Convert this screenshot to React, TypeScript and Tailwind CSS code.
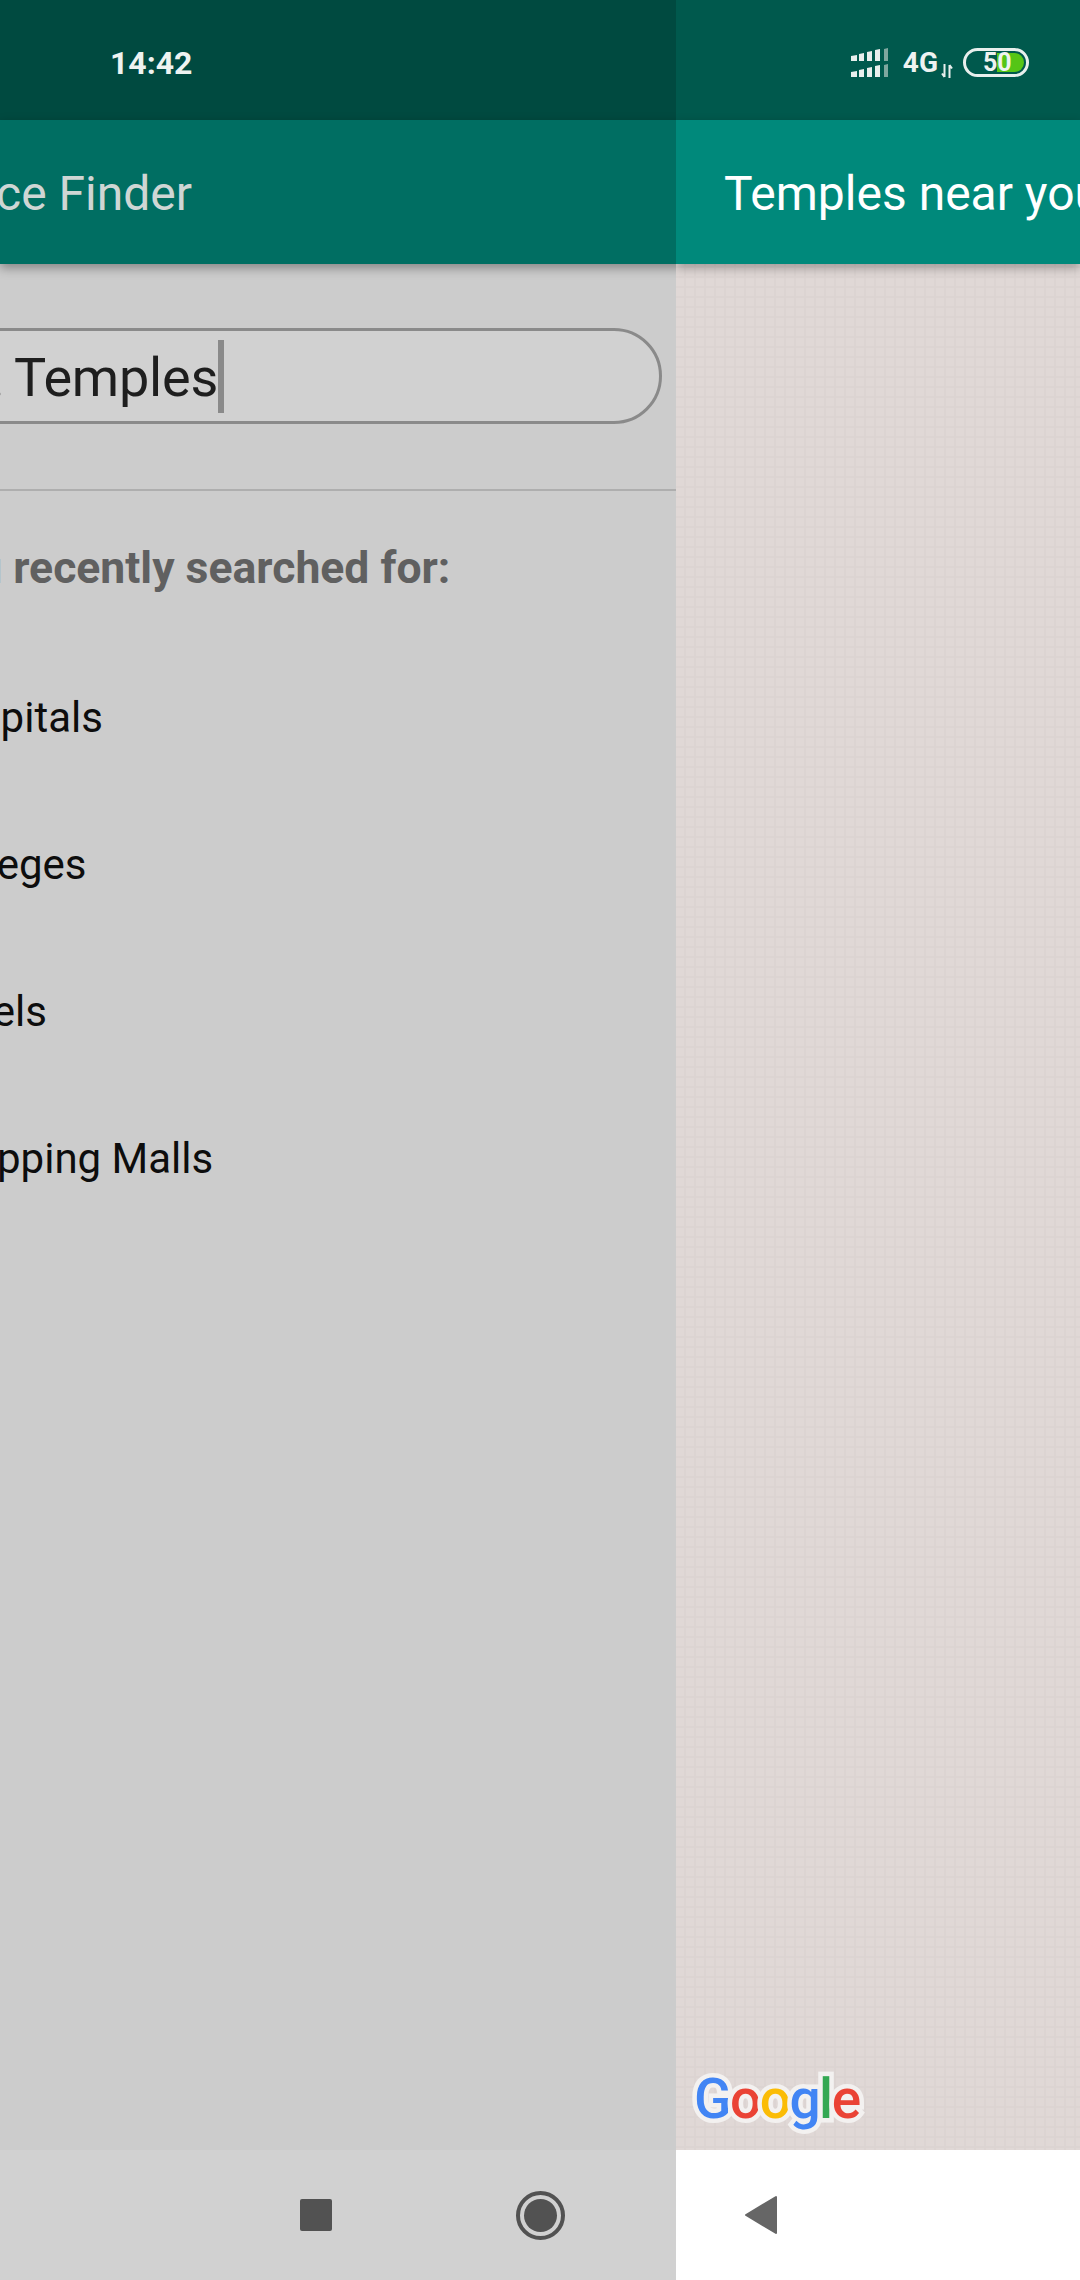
import { Search } from "lucide-react";

const font = "font-['Roboto',sans-serif]";

function SignalIcon() {
  const rows = [0, 1];
  return (
    <svg width="38" height="30" viewBox="0 0 38 30" className="block">
      {rows.map((r) => (
        <g key={r} transform={`translate(0 ${r * 16})`} fill="#e8efed">
          <path d="M0 8 L6 7 V13 H0 Z" />
          <path d="M8 6 L13 5 V13 H8 Z" />
          <path d="M16 4 L21 3 V13 H16 Z" />
          <path d="M24 2 L29 1 V13 H24 Z" />
          <path d="M33 1 L37 0 V13 H33 Z" fill="#7fa79f" />
        </g>
      ))}
    </svg>
  );
}

function BatteryIcon() {
  return (
    <div className="relative w-[66px] h-[29px] rounded-full border-[3px] border-[#e8efed]">
      <div className="absolute left-[31px] top-[2px] w-[27px] h-[19px] rounded-r-full bg-[#55c516]" />
      <span className={`absolute left-[17px] top-[-5px] text-[25px] leading-[33px] font-bold text-[#eef3f1] ${font}`}>50</span>
    </div>
  );
}

function GoogleLogo() {
  return (
    <div className={`flex items-baseline text-[55px] leading-[60px] tracking-[-1.5px] font-medium ${font} [-webkit-text-stroke:9px_#f3f1f0] [paint-order:stroke_fill]`}>
      <span className="text-[#4285f4]">G</span>
      <span className="text-[#ea4335]">o</span>
      <span className="text-[#fbbc05]">o</span>
      <span className="text-[#4285f4]">g</span>
      <span className="text-[#34a853]">l</span>
      <span className="text-[#ea4335]">e</span>
    </div>
  );
}

export default function App() {
  return (
    <div className={`flex w-[1080px] h-[2280px] overflow-hidden ${font}`}>
      {/* Drawer side, slid partly off the left edge */}
      <div className="flex flex-col w-[676px] shrink-0 overflow-hidden bg-[#cccccc]">
        <div className="h-[120px] shrink-0 flex items-center pl-[110px] pt-[6px] bg-[#004a40]">
          <span className="text-[32px] leading-[40px] font-bold text-[#eef3f1]">14:42</span>
        </div>
        <div className="h-[144px] w-[700px] shrink-0 flex items-center justify-end pr-[508px] pt-[3px] bg-[#006e62] shadow-[0_4px_10px_rgba(0,0,0,0.35)] z-10">
          <span className="text-[48px] whitespace-nowrap text-[#cfd6d4]">Place Finder</span>
        </div>
        <div className="h-[227px] shrink-0 border-b-2 border-[#aeaeae] pt-[64px]">
          <div className="ml-[-60px] w-[722px] h-[96px] rounded-full border-[3px] border-[#8a8a8a] bg-[#d1d1d1] flex items-center pl-[13px]">
            <Search size={48} strokeWidth={2.5} className="text-[#8a8a8a] shrink-0" />
            <span className="ml-[10px] pt-[3px] text-[54px] leading-[64px] tracking-[-0.2px] text-[#1e1e1e]">Temples</span>
            <span className="w-[6px] h-[73px] bg-[#8a8a8a]" />
          </div>
        </div>
        <div className="flex flex-col flex-1 items-start">
          <div className="mt-[49px] ml-[-74px] text-[44.5px] leading-[56px] font-bold text-[#606060] whitespace-nowrap">You recently searched for:</div>
          <div className="mt-[97px] ml-[-75px] flex flex-col gap-[98px] text-[42px] leading-[49px] text-[#0d0d0d] whitespace-nowrap">
            <span>Hospitals</span>
            <span>Colleges</span>
            <span>Hotels</span>
            <span>Shopping Malls</span>
          </div>
        </div>
        <div className="h-[130px] shrink-0 bg-[#d1d1d1] flex items-center">
          <div className="ml-[300px] w-[32px] h-[32px] rounded-[2px] bg-[#525252]" />
          <div className="ml-[184px] w-[49px] h-[49px] rounded-full border-[4px] border-[#525252] flex items-center justify-center">
            <div className="w-[33px] h-[33px] rounded-full bg-[#525252]" />
          </div>
        </div>
      </div>

      {/* Map side */}
      <div className="flex flex-col flex-1 min-w-0 overflow-hidden">
        <div className="h-[120px] shrink-0 flex items-center justify-end pr-[51px] pt-[5px] bg-[#00594d]">
          <SignalIcon />
          <div className="flex items-end ml-[14px]">
            <span className="text-[28px] leading-[32px] font-bold text-[#eef3f1]">4G</span>
            <svg width="12" height="14" viewBox="0 0 12 14" className="mb-[1px] ml-[3px]">
              <path d="M3.5 0V13M1 9.5L3.5 13M8.5 14V1M8.5 1L11 4.5" stroke="#e8efed" strokeWidth="2" fill="none" />
            </svg>
          </div>
          <div className="ml-[10px]">
            <BatteryIcon />
          </div>
        </div>
        <div className="h-[144px] shrink-0 flex items-center pl-[48px] pt-[3px] bg-[#00897b] overflow-hidden shadow-[0_4px_10px_rgba(0,0,0,0.3)] z-10">
          <span className="text-[48px] whitespace-nowrap text-white">Temples near you</span>
        </div>
        <div className="relative flex-1 bg-[#e0d8d6] bg-[linear-gradient(to_right,#dcd4d2_2px,transparent_2px),linear-gradient(to_bottom,#dcd4d2_2px,transparent_2px)] bg-[size:10px_10px] bg-[position:8px_2px]">
          <div className="absolute left-[18px] bottom-[21px]">
            <GoogleLogo />
          </div>
        </div>
        <div className="h-[130px] shrink-0 bg-white flex items-center pl-[68px]">
          <svg width="34" height="40" viewBox="0 0 34 40">
            <path d="M32 2 V38 L2 20 Z" fill="#666666" stroke="#666666" strokeWidth="2" strokeLinejoin="round" />
          </svg>
        </div>
      </div>
    </div>
  );
}
